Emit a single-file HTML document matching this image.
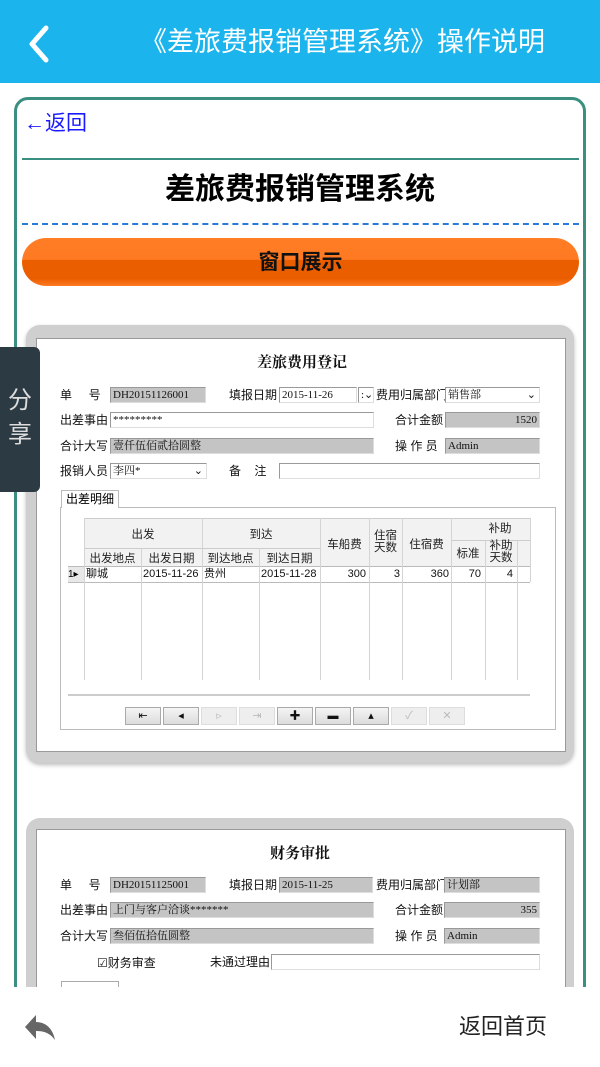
<!DOCTYPE html>
<html style="width:600px;height:1067px;overflow:hidden"><head><meta charset="utf-8">
<style>
*{margin:0;padding:0;box-sizing:border-box}
body{width:600px;height:1067px;overflow:hidden;background:#fff;position:relative;font-family:"Liberation Sans","Noto Sans CJK SC",sans-serif}
.a{position:absolute}
.f{position:absolute;height:16px;border:1px solid #999;border-right-color:#ddd;border-bottom-color:#ddd;font-size:11px;line-height:14px;padding-left:2px;white-space:nowrap;overflow:hidden;color:#111;font-family:"Liberation Serif","Noto Serif CJK SC",serif}
.g{background:#c4c4c4}
.w{background:#fff}
.l{position:absolute;font-size:12px;color:#111;white-space:nowrap;line-height:16px}
.t{position:absolute;font-size:11.5px;color:#222;text-align:center;white-space:nowrap}
.vl{position:absolute;width:1px;background:#d4d4d4}
.btn{position:absolute;top:707px;width:36px;height:18px;border:1px solid #aaa;background:linear-gradient(#f4f4f4,#dcdcdc);font-size:11px;text-align:center;line-height:16px;color:#111}
</style></head><body>
<div class="a" style="left:0;top:0;width:600px;height:83px;background:#1bb4ec"></div>
<svg class="a" style="left:26px;top:24px" width="28" height="40"><path d="M20 4 L6 20 L20 36" stroke="#fff" stroke-width="5" fill="none" stroke-linecap="round" stroke-linejoin="round"/></svg>
<div class="a" style="left:140px;top:23px;width:420px;font-size:27px;color:#fff;line-height:38px;white-space:nowrap">《差旅费报销管理系统》操作说明</div>

<div class="a" style="left:14px;top:97px;width:572px;height:1000px;border:3px solid #3a8f80;border-radius:14px"></div>
<div class="a" style="left:24px;top:110px;font-size:21px;color:#1a1aff;line-height:28px">←返回</div>
<div class="a" style="left:22px;top:158px;width:557px;height:2px;background:#3a8f80"></div>
<div class="a" style="left:0;top:170px;width:600px;text-align:center;font-size:30px;font-weight:bold;color:#000;line-height:40px">差旅费报销管理系统</div>
<div class="a" style="left:22px;top:223px;width:557px;border-top:2px dashed #2a7ad8"></div>
<div class="a" style="left:22px;top:238px;width:557px;height:48px;border-radius:24px;background:linear-gradient(#ff7d25 0%,#ff7a22 45%,#ea5e00 46%,#ea5e00 85%,#ff7a22 100%);text-align:center;font-size:21px;font-weight:bold;line-height:50px;color:#111">窗口展示</div>

<div class="a" style="left:26px;top:325px;width:548px;height:438px;background:#cfcfcf;border-radius:14px;box-shadow:0 2px 4px #bbb"></div>
<div class="a" style="left:36px;top:338px;width:530px;height:414px;background:#fff;border:1px solid #999"></div>
<div class="a" style="left:0;top:350px;width:600px;text-align:center;font-size:15px;font-weight:bold;color:#111;font-family:'Noto Serif CJK SC',serif;line-height:24px;padding-left:4px">差旅费用登记</div>
<div class="l" style="left:60px;top:387px">单&nbsp;&nbsp;&nbsp;&nbsp;&nbsp;号</div>
<div class="f g" style="left:110px;top:387px;width:96px">DH20151126001</div>
<div class="l" style="left:229px;top:387px">填报日期</div>
<div class="f w" style="left:279px;top:387px;width:78px">2015-11-26</div>
<div class="f w" style="left:358px;top:387px;width:16px">:⌄</div>
<div class="l" style="left:376px;top:387px">费用归属部门</div>
<div class="f w" style="left:445px;top:387px;width:95px">销售部<span style="float:right;padding-right:3px">⌄</span></div>
<div class="l" style="left:60px;top:412px">出差事由</div>
<div class="f w" style="left:110px;top:412px;width:264px">*********</div>
<div class="l" style="left:395px;top:412px">合计金额</div>
<div class="f g" style="left:445px;top:412px;width:95px;text-align:right;padding-right:2px">1520</div>
<div class="l" style="left:60px;top:438px">合计大写</div>
<div class="f g" style="left:110px;top:438px;width:264px">壹仟伍佰贰拾圆整</div>
<div class="l" style="left:395px;top:438px">操 作 员</div>
<div class="f g" style="left:445px;top:438px;width:95px">Admin</div>
<div class="l" style="left:60px;top:463px">报销人员</div>
<div class="f w" style="left:110px;top:463px;width:97px">李四*<span style="float:right;padding-right:3px">⌄</span></div>
<div class="l" style="left:229px;top:463px">备&nbsp;&nbsp;&nbsp;&nbsp;注</div>
<div class="f w" style="left:279px;top:463px;width:261px"></div>
<div class="a" style="left:60px;top:507px;width:496px;height:223px;border:1px solid #bbb"></div>
<div class="a" style="left:61px;top:490px;width:58px;height:18px;border:1px solid #bbb;border-bottom:none;background:#fff;font-size:12px;line-height:17px;text-align:center">出差明细</div>
<div class="a" style="left:84px;top:518px;width:446px;height:64px;background:#f2f2f2;border-top:1px solid #ccc"></div>
<div class="a" style="left:68px;top:566px;width:16px;height:16px;background:#e8e8e8"></div>
<div class="a" style="left:84px;top:566px;width:446px;height:16px;background:#fff"></div>
<div class="a" style="left:84px;top:548px;width:236px;height:1px;background:#ccc"></div>
<div class="a" style="left:451px;top:540px;width:79px;height:1px;background:#ccc"></div>
<div class="a" style="left:68px;top:566px;width:462px;height:1px;background:#bbb"></div>
<div class="a" style="left:68px;top:582px;width:462px;height:1px;background:#bbb"></div>
<div class="vl" style="left:84px;top:518px;height:162px"></div>
<div class="vl" style="left:141px;top:548px;height:132px"></div>
<div class="vl" style="left:202px;top:518px;height:162px"></div>
<div class="vl" style="left:259px;top:548px;height:132px"></div>
<div class="vl" style="left:320px;top:518px;height:162px"></div>
<div class="vl" style="left:369px;top:518px;height:162px"></div>
<div class="vl" style="left:402px;top:518px;height:162px"></div>
<div class="vl" style="left:451px;top:518px;height:162px"></div>
<div class="vl" style="left:485px;top:540px;height:140px"></div>
<div class="vl" style="left:517px;top:540px;height:140px"></div>
<div class="vl" style="left:530px;top:518px;height:64px"></div>
<div class="t" style="left:84px;top:526px;width:118px">出发</div>
<div class="t" style="left:202px;top:526px;width:118px">到达</div>
<div class="t" style="left:84px;top:550px;width:57px">出发地点</div>
<div class="t" style="left:141px;top:550px;width:61px">出发日期</div>
<div class="t" style="left:202px;top:550px;width:57px">到达地点</div>
<div class="t" style="left:259px;top:550px;width:61px">到达日期</div>
<div class="t" style="left:320px;top:536px;width:49px">车船费</div>
<div class="t" style="left:369px;top:530px;width:33px;line-height:12px">住宿<br>天数</div>
<div class="t" style="left:402px;top:536px;width:49px">住宿费</div>
<div class="t" style="left:470px;top:520px;width:60px">补助</div>
<div class="t" style="left:451px;top:545px;width:34px">标准</div>
<div class="t" style="left:485px;top:540px;width:32px;line-height:12px">补助<br>天数</div>
<div class="a" style="left:68px;top:567px;font-size:10px;line-height:15px">1▸</div>
<div class="l" style="left:86px;top:567px;font-size:11px;line-height:15px">聊城</div>
<div class="l" style="left:143px;top:567px;font-size:11px;line-height:15px">2015-11-26</div>
<div class="l" style="left:204px;top:567px;font-size:11px;line-height:15px">贵州</div>
<div class="l" style="left:261px;top:567px;font-size:11px;line-height:15px">2015-11-28</div>
<div class="l" style="left:320px;top:567px;width:46px;text-align:right;font-size:11px;line-height:15px">300</div>
<div class="l" style="left:369px;top:567px;width:31px;text-align:right;font-size:11px;line-height:15px">3</div>
<div class="l" style="left:402px;top:567px;width:47px;text-align:right;font-size:11px;line-height:15px">360</div>
<div class="l" style="left:451px;top:567px;width:30px;text-align:right;font-size:11px;line-height:15px">70</div>
<div class="l" style="left:485px;top:567px;width:28px;text-align:right;font-size:11px;line-height:15px">4</div>
<div class="a" style="left:68px;top:694px;width:462px;height:2px;background:#ccc"></div>
<div class="btn" style="left:125px">⇤</div>
<div class="btn" style="left:163px">◂</div>
<div class="btn" style="left:201px;color:#bbb;background:#eee;border-color:#ddd">▹</div>
<div class="btn" style="left:239px;color:#bbb;background:#eee;border-color:#ddd">⇥</div>
<div class="btn" style="left:277px;font-weight:bold">✚</div>
<div class="btn" style="left:315px;font-weight:bold">▬</div>
<div class="btn" style="left:353px">▴</div>
<div class="btn" style="left:391px;color:#bbb;background:#eee;border-color:#ddd">✓</div>
<div class="btn" style="left:429px;color:#bbb;background:#eee;border-color:#ddd">✕</div>

<div class="a" style="left:26px;top:818px;width:548px;height:249px;background:#cfcfcf;border-radius:14px 14px 0 0"></div>
<div class="a" style="left:36px;top:829px;width:530px;height:238px;background:#fff;border:1px solid #999;border-bottom:none"></div>
<div class="a" style="left:0;top:841px;width:600px;text-align:center;font-size:15px;font-weight:bold;color:#111;font-family:'Noto Serif CJK SC',serif;line-height:24px">财务审批</div>
<div class="l" style="left:60px;top:877px">单&nbsp;&nbsp;&nbsp;&nbsp;&nbsp;号</div>
<div class="f g" style="left:110px;top:877px;width:96px">DH20151125001</div>
<div class="l" style="left:229px;top:877px">填报日期</div>
<div class="f g" style="left:279px;top:877px;width:94px">2015-11-25</div>
<div class="l" style="left:376px;top:877px">费用归属部门</div>
<div class="f g" style="left:444px;top:877px;width:96px">计划部</div>
<div class="l" style="left:60px;top:902px">出差事由</div>
<div class="f g" style="left:110px;top:902px;width:264px">上门与客户洽谈*******</div>
<div class="l" style="left:395px;top:902px">合计金额</div>
<div class="f g" style="left:444px;top:902px;width:96px;text-align:right;padding-right:2px">355</div>
<div class="l" style="left:60px;top:928px">合计大写</div>
<div class="f g" style="left:110px;top:928px;width:264px">叁佰伍拾伍圆整</div>
<div class="l" style="left:395px;top:928px">操 作 员</div>
<div class="f g" style="left:444px;top:928px;width:96px">Admin</div>
<div class="l" style="left:97px;top:955px">☑财务审查</div>
<div class="l" style="left:210px;top:954px">未通过理由</div>
<div class="f w" style="left:271px;top:954px;width:269px"></div>
<div class="a" style="left:61px;top:981px;width:58px;height:6px;border:1px solid #aaa;border-bottom:none"></div>

<div class="a" style="left:0;top:987px;width:600px;height:80px;background:#fff"></div>
<svg class="a" style="left:0;top:1000px" width="70" height="50"><path d="M25 27 L36 15 L36 22 C46 22 53 29 55 40 C50 33 44 31 36 31 L36 39 Z" fill="#666"/></svg>
<div class="a" style="left:459px;top:1012px;font-size:22px;color:#222;line-height:30px">返回首页</div>

<div class="a" style="left:0;top:347px;width:40px;height:145px;background:#2c3a44;border-radius:0 6px 6px 0"></div>
<div class="a" style="left:8px;top:384px;font-size:24px;color:#ddd;line-height:34px;width:26px">分<br>享</div>
</body></html>
